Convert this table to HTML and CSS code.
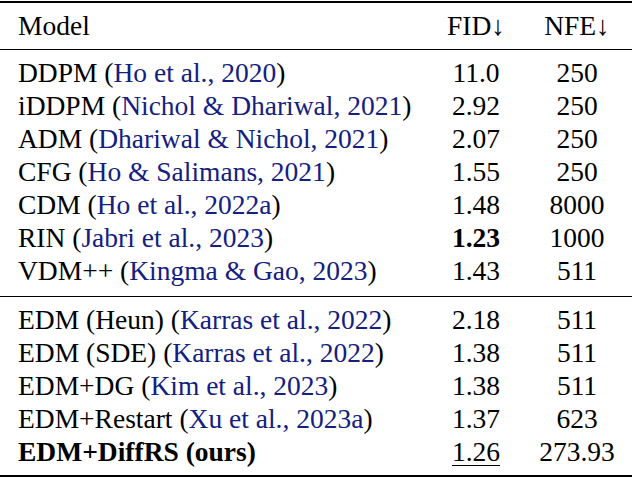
FILE: index.html
```html
<!DOCTYPE html>
<html lang="en">
<head>
  <meta charset="UTF-8">
  <title>FID / NFE comparison</title>
  <link rel="stylesheet" href="styles.css">
</head>
<body>
  <table class="results">
    <thead>
      <tr>
        <th class="model">Model</th>
        <th class="num fid">FID&darr;</th>
        <th class="num nfe">NFE&darr;</th>
      </tr>
    </thead>
    <tbody>
      <tr class="first"><td class="model">DDPM (<span class="cite">Ho et al., 2020</span>)</td><td class="num">11.0</td><td class="num">250</td></tr>
      <tr><td class="model">iDDPM (<span class="cite">Nichol &amp; Dhariwal, 2021</span>)</td><td class="num">2.92</td><td class="num">250</td></tr>
      <tr><td class="model">ADM (<span class="cite">Dhariwal &amp; Nichol, 2021</span>)</td><td class="num">2.07</td><td class="num">250</td></tr>
      <tr><td class="model">CFG (<span class="cite">Ho &amp; Salimans, 2021</span>)</td><td class="num">1.55</td><td class="num">250</td></tr>
      <tr><td class="model">CDM (<span class="cite">Ho et al., 2022a</span>)</td><td class="num">1.48</td><td class="num">8000</td></tr>
      <tr><td class="model">RIN (<span class="cite">Jabri et al., 2023</span>)</td><td class="num"><b>1.23</b></td><td class="num">1000</td></tr>
      <tr class="last"><td class="model">VDM++ (<span class="cite">Kingma &amp; Gao, 2023</span>)</td><td class="num">1.43</td><td class="num">511</td></tr>
    </tbody>
    <tbody class="edm">
      <tr class="first"><td class="model">EDM (Heun) (<span class="cite">Karras et al., 2022</span>)</td><td class="num">2.18</td><td class="num">511</td></tr>
      <tr><td class="model">EDM (SDE) (<span class="cite">Karras et al., 2022</span>)</td><td class="num">1.38</td><td class="num">511</td></tr>
      <tr><td class="model">EDM+DG (<span class="cite">Kim et al., 2023</span>)</td><td class="num">1.38</td><td class="num">511</td></tr>
      <tr><td class="model">EDM+Restart (<span class="cite">Xu et al., 2023a</span>)</td><td class="num">1.37</td><td class="num">623</td></tr>
      <tr class="last"><td class="model"><b>EDM+DiffRS (ours)</b></td><td class="num"><u>1.26</u></td><td class="num">273.93</td></tr>
    </tbody>
  </table>
</body>
</html>
```

FILE: styles.css
```css
body {
  margin: 0;
  padding: 0;
  background: #fff;
  color: #000;
  font-family: "Liberation Serif", "Times New Roman", serif;
}

.results {
  width: 632px;
  margin-top: 1px;
  border-collapse: separate;
  border-spacing: 0;
  table-layout: fixed;
  border-top: 2px solid #000;
  border-bottom: 2px solid #000;
  font-size: 27.5px;
  line-height: 33px;
}

.results th,
.results td {
  padding: 0;
  font-weight: normal;
  white-space: nowrap;
}

.results thead th {
  padding-top: 6px;
  padding-bottom: 7px;
  border-bottom: 1.5px solid #000;
}

.results tr.first td {
  padding-top: 6px;
}

.results tbody tr.last td {
  padding-bottom: 9px;
}

.results .edm tr.first td {
  padding-top: 6px;
  border-top: 1px solid #000;
}

.results .edm tr.last td {
  padding-bottom: 7px;
}

.results .model {
  text-align: left;
  padding-left: 18px;
  width: 412px;
}

.num {
  text-align: center;
}

.fid {
  width: 92px;
}

.nfe {
  width: 110px;
}

.cite {
  color: #13207f;
}

u {
  text-decoration-thickness: 1px;
  text-underline-offset: 4px;
}
```
